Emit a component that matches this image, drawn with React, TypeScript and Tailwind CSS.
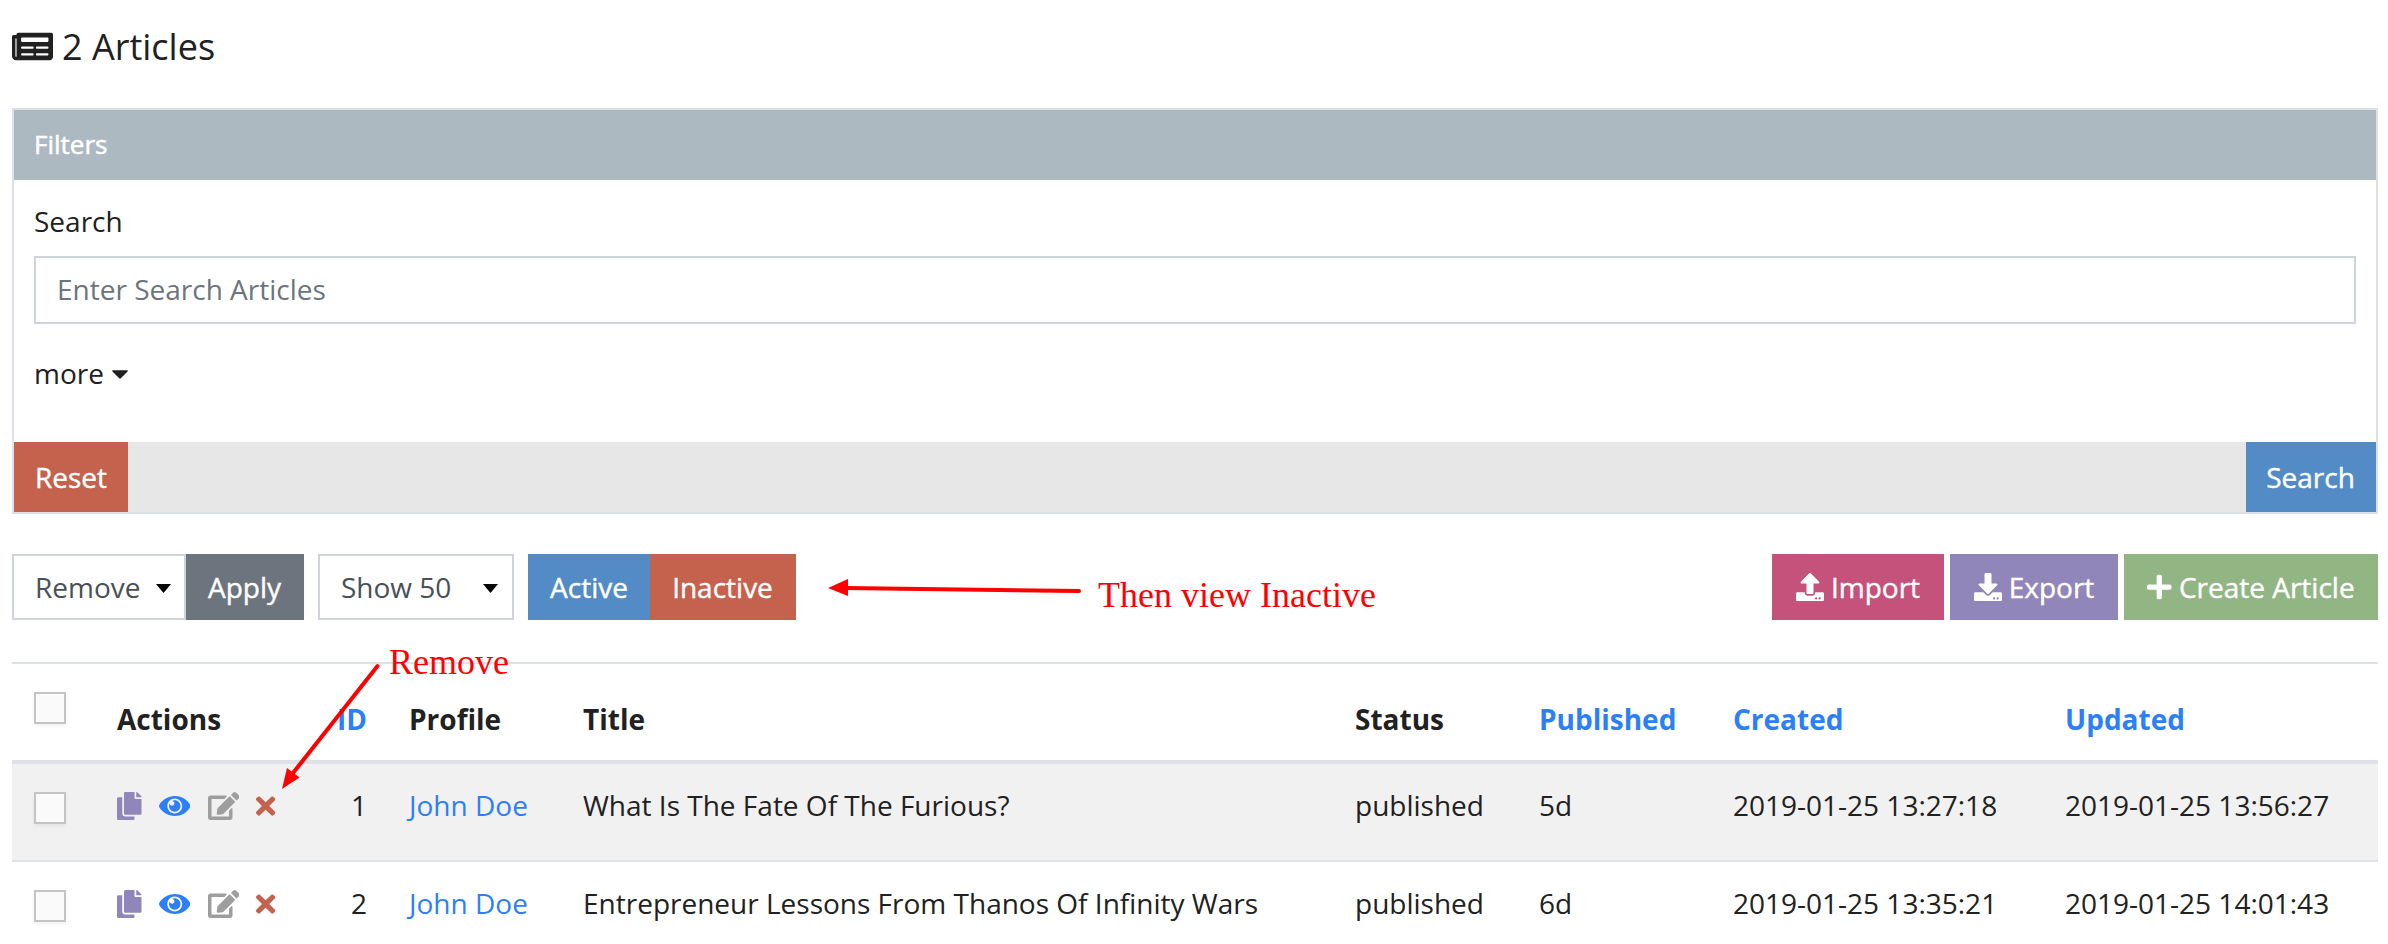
import { FaNewspaper, FaUpload, FaDownload, FaPlus, FaCopy, FaEdit, FaTimes } from "react-icons/fa";

const articles = [
  { id: 1, profile: "John Doe", title: "What Is The Fate Of The Furious?", status: "published", published: "5d", created: "2019-01-25 13:27:18", updated: "2019-01-25 13:56:27" },
  { id: 2, profile: "John Doe", title: "Entrepreneur Lessons From Thanos Of Infinity Wars", status: "published", published: "6d", created: "2019-01-25 13:35:21", updated: "2019-01-25 14:01:43" },
];

const columns = "grid grid-cols-[105px_210px_82px_174px_772px_184px_194px_332px_1fr]";

function Checkbox() {
  return <div className="ml-[22px] size-8 border-2 border-[#c4c4c4] bg-[#fafafa] shadow-[0_2px_4px_rgba(0,0,0,0.06)]" />;
}

function Eye() {
  return (
    <svg viewBox="0 0 576 512" className="h-7 w-[31.5px] text-[#2d7ff9]" fill="currentColor">
      <path d="M569.354 231.631C512.969 135.949 407.81 72 288 72 168.14 72 63.004 135.994 6.646 231.631a47.999 47.999 0 0 0 0 48.739C63.031 376.051 168.19 440 288 440c119.86 0 224.996-63.994 281.354-159.631a47.997 47.997 0 0 0 0-48.738zM288 392c-75.162 0-136-60.827-136-136 0-75.162 60.826-136 136-136 75.162 0 136 60.826 136 136 0 75.162-60.826 136-136 136zm104-136c0 57.438-46.562 104-104 104s-104-46.562-104-104c0-17.708 4.431-34.379 12.236-48.973l-.001.032c0 23.651 19.173 42.823 42.824 42.823s42.824-19.173 42.824-42.823c0-23.651-19.173-42.824-42.824-42.824l-.032.001C253.621 156.431 270.292 152 288 152c57.438 0 104 46.562 104 104z" />
    </svg>
  );
}

function Select({ label, className }: { label: string; className: string }) {
  return (
    <div className={`flex h-[66px] items-center justify-between border-2 border-[#ced4da] bg-white pl-[21px] text-[#495057] ${className}`}>
      <span>{label}</span>
      <svg width="15" height="9" viewBox="0 0 15 9" className="mt-0.5"><path d="M0 0H15L7.5 9Z" fill="#000" /></svg>
    </div>
  );
}

export default function App() {
  return (
    <div className="relative h-[944px] w-[2388px] overflow-hidden bg-white px-3 font-['Open_Sans','Noto_Sans',sans-serif] text-[28px] leading-[42px] whitespace-nowrap text-[#212121]">
      <h1 className="flex h-[108px] items-start pt-[22px] text-[36px] leading-[50px]">
        <FaNewspaper className="mt-[4px] mr-[9px] size-[41px]" />
        2 Articles
      </h1>

      <section className="h-[406px] w-[2366px] border-2 border-[#dee2e6]">
        <header className="h-[70px] bg-[#adb9c1] px-5 pt-[13px] text-[26px] text-white [-webkit-text-stroke:0.5px]">Filters</header>
        <div className="h-[262px] px-5 pt-5">
          <label className="block">Search</label>
          <div className="mt-[14px] h-[68px] border-2 border-[#ced4da] px-[21px] pt-[10px] text-[#6c757d]">Enter Search Articles</div>
          <div className="mt-[28px] flex items-center gap-2">
            <span>more</span>
            <svg width="16" height="9" viewBox="0 0 16 9" className="mt-[3px]"><path d="M1 1H15L8 8Z" fill="#212121" stroke="#212121" strokeWidth="1.6" strokeLinejoin="round" /></svg>
          </div>
        </div>
        <footer className="flex h-[70px] justify-between bg-[#e7e7e7] text-white [-webkit-text-stroke:0.4px]">
          <button className="w-[114px] bg-[#c4624e]">Reset</button>
          <button className="w-[130px] bg-[#528bc5] pr-px">Search</button>
        </footer>
      </section>

      <div className="mt-10 flex h-[66px] w-[2366px] items-stretch text-white">
        <Select label="Remove" className="w-[174px] pr-[13px]" />
        <button className="w-[118px] bg-[#6c757d] pr-px [-webkit-text-stroke:0.4px]">Apply</button>
        <Select label="Show 50" className="ml-[14px] w-[196px] pr-[14px]" />
        <button className="ml-[14px] w-[122px] bg-[#528bc5] [-webkit-text-stroke:0.4px]">Active</button>
        <button className="w-[146px] bg-[#c4624e] pr-px [-webkit-text-stroke:0.4px]">Inactive</button>
        <div className="ml-auto flex gap-[6px]">
          <button className="flex w-[172px] items-center justify-center gap-[7px] bg-[#c5527a] [-webkit-text-stroke:0.4px]"><FaUpload />Import</button>
          <button className="flex w-[168px] items-center justify-center gap-[7px] bg-[#9186b9] [-webkit-text-stroke:0.4px]"><FaDownload />Export</button>
          <button className="flex w-[254px] items-center justify-center gap-[7px] bg-[#92b584] [-webkit-text-stroke:0.4px]"><FaPlus className="w-[24.5px]" />Create Article</button>
        </div>
      </div>

      <div className="mt-[42px] w-[2366px] border-t-2 border-[#dee2e6]">
        <div className={`${columns} h-[100px] border-b-4 border-[#dee2e6] pt-[34px] font-bold`}>
          <div className="-mt-[6px]"><Checkbox /></div>
          <div>Actions</div>
          <div className="pr-[42px] text-right text-[#2d7ff9]">ID</div>
          <div>Profile</div>
          <div>Title</div>
          <div>Status</div>
          <div className="text-[#2d7ff9]">Published</div>
          <div className="text-[#2d7ff9]">Created</div>
          <div className="text-[#2d7ff9]">Updated</div>
        </div>
        {articles.map((a) => (
          <div key={a.id} className={`${columns} h-[98px] border-b-2 border-[#dee2e6] pt-5 odd:bg-white even:bg-[#f1f1f1]`}>
            <div className="pt-2"><Checkbox /></div>
            <div className="flex h-7 items-center gap-[17.25px] self-start pt-[15px]">
              <FaCopy className="h-7 w-[24.5px] text-[#9186b9]" />
              <Eye />
              <FaEdit className="h-7 w-[31.5px] text-[#9e9e9e]" />
              <FaTimes className="h-7 w-[19.25px] text-[#c4624e]" />
            </div>
            <div className="pr-[42px] text-right">{a.id}</div>
            <div className="text-[#2d7ff9]">{a.profile}</div>
            <div>{a.title}</div>
            <div>{a.status}</div>
            <div>{a.published}</div>
            <div>{a.created}</div>
            <div>{a.updated}</div>
          </div>
        ))}
      </div>

      <svg className="pointer-events-none absolute inset-0" width="2388" height="944" fill="#f00" stroke="#f00">
        <path d="M377.500 666L293 773" strokeWidth="4" strokeLinecap="round" />
        <path d="M282 789L287 768L299.500 777.500Z" stroke="none" />
        <path d="M1079 591L845 588" strokeWidth="4" strokeLinecap="round" />
        <path d="M828 588L848 579V596Z" stroke="none" />
      </svg>
      <div className="absolute top-[641px] left-[389px] font-['Liberation_Serif',serif] text-[36px] leading-[42px] text-[#f00]">Remove</div>
      <div className="absolute top-[574px] left-[1098px] font-['Liberation_Serif',serif] text-[36px] leading-[42px] text-[#f00]">Then view Inactive</div>
    </div>
  );
}
